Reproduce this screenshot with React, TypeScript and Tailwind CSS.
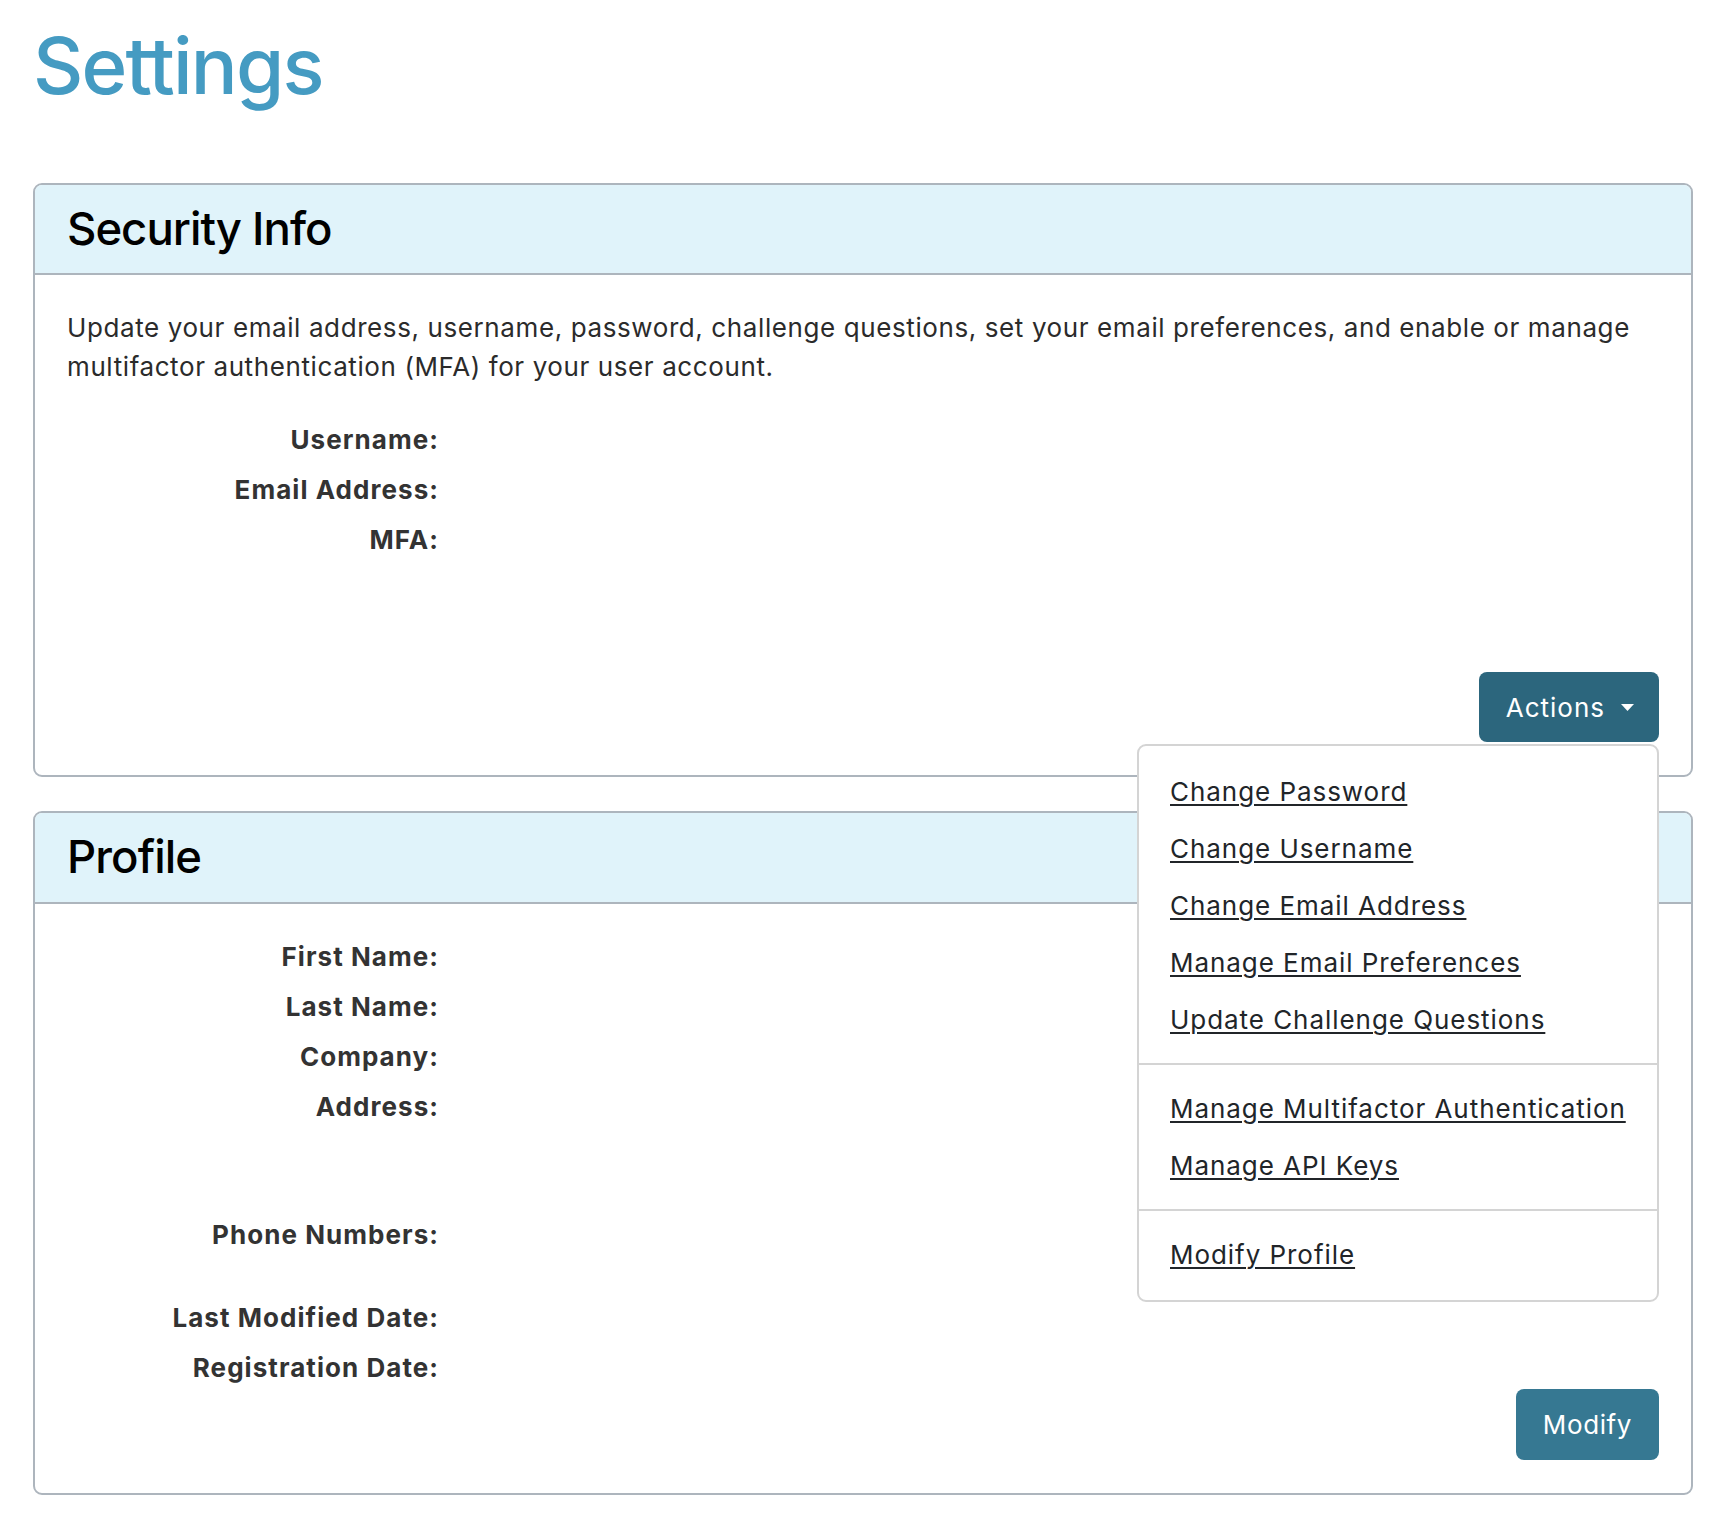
import { useState } from 'react';

const securityRows = ['Username:', 'Email Address:', 'MFA:'];

const menuGroups = [
  ['Change Password', 'Change Username', 'Change Email Address', 'Manage Email Preferences', 'Update Challenge Questions'],
  ['Manage Multifactor Authentication', 'Manage API Keys'],
  ['Modify Profile'],
];

function Row({ label, className = '' }: { label: string; className?: string }) {
  return (
    <div className={`grid grid-cols-[372px_1fr] ${className}`}>
      <dt className="text-right font-bold tracking-[1.05px] text-[#333333]">{label}</dt>
      <dd />
    </div>
  );
}

function Card({ title, tracking, children }: { title: string; tracking: string; children: React.ReactNode }) {
  return (
    <section className="rounded-[9px] border-2 border-[#adb5bd] bg-white">
      <div className="rounded-t-[7px] border-b-2 border-[#adb5bd] bg-[#e0f3fa] px-[32px] py-[17px]">
        <h2 className={`text-[45.5px] font-medium leading-[1.2] text-black ${tracking}`}>{title}</h2>
      </div>
      <div className="px-[32px] pb-[33px] pt-[33px]">{children}</div>
    </section>
  );
}

function ActionsMenu() {
  const [open] = useState(true);
  return (
    <div className="relative">
      <button className="flex h-[70px] items-center rounded-[8px] bg-[#2c667d] pl-[27px] pr-[25px] text-[26px] tracking-[1px] text-white">
        Actions
        <svg className="ml-[16px]" width="13" height="7" viewBox="0 0 13 7">
          <polygon points="0,0 13,0 6.5,7" fill="white" />
        </svg>
      </button>
      {open && (
        <div className="absolute right-0 top-full z-10 mt-[2px] w-[522px] rounded-[9px] border-2 border-[#d4d4d4] bg-white py-[17px]">
          {menuGroups.map((group, gi) => (
            <div key={gi}>
              {gi > 0 && <div className="my-[15px] h-[2px] bg-[#d4d4d4]" />}
              {group.map((item) => (
                <a key={item} href="#" className="block px-[31px] py-[9px] tracking-[0.95px] text-[#212529] underline decoration-[1.5px] underline-offset-[3px]">
                  {item}
                </a>
              ))}
            </div>
          ))}
        </div>
      )}
    </div>
  );
}

export default function App() {
  return (
    <div className="min-h-[1529px] bg-white pb-[36px] pl-[33px] pr-[37px] pt-[19px] font-['Inter','Noto_Sans',sans-serif] text-[26px] leading-[39px] text-[#2b2b2b]">
      <h1 className="text-[78px] font-medium leading-[1.2] tracking-[-1.8px] text-[#459bc2]">Settings</h1>

      <div className="mt-[70px] flex flex-col gap-[34px]">
        <Card title="Security Info" tracking="tracking-[-1px]">
          <p className="mb-[34px] tracking-[0.6px]">
            Update your email address, username, password, challenge questions, set your email preferences, and enable or manage multifactor authentication (MFA) for your user account.
          </p>
          <dl className="flex flex-col gap-[11px]">
            {securityRows.map((r) => (
              <Row key={r} label={r} />
            ))}
          </dl>
          <div className="mt-[113px] flex justify-end">
            <ActionsMenu />
          </div>
        </Card>

        <Card title="Profile" tracking="tracking-[-0.9px]">
          <dl className="flex flex-col gap-[11px]">
            <Row label="First Name:" />
            <Row label="Last Name:" />
            <Row label="Company:" />
            <Row label="Address:" className="min-h-[117px]" />
            <Row label="Phone Numbers:" className="min-h-[72px]" />
            <Row label="Last Modified Date:" />
            <Row label="Registration Date:" />
          </dl>
          <div className="mt-[2px] flex justify-end">
            <button className="flex h-[71px] items-center rounded-[8px] bg-[#367892] px-[27px] text-[26px] tracking-[0.6px] text-white">
              Modify
            </button>
          </div>
        </Card>
      </div>
    </div>
  );
}
